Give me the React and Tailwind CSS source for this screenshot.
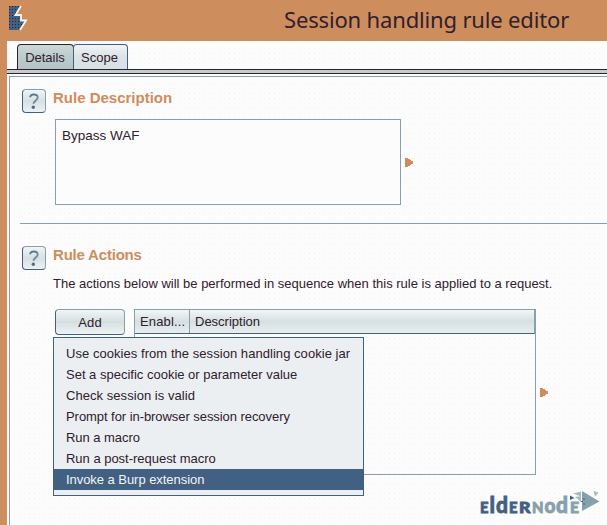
import React from "react";

const actions = [
  ["Use cookies from the session handling cookie jar", "tracking-[0.05px]"],
  ["Set a specific cookie or parameter value", "tracking-[0px]"],
  ["Check session is valid", "tracking-[0.05px]"],
  ["Prompt for in-browser session recovery", "tracking-[-0.06px]"],
  ["Run a macro", "tracking-[-0.04px]"],
  ["Run a post-request macro", "tracking-[-0.02px]"],
  ["Invoke a Burp extension", "tracking-[-0.05px]"],
];

function HelpButton() {
  return (
    <button className="flex h-6 w-6 shrink-0 items-center justify-center rounded-[4px] border border-[#86a0aa] border-b-[#426082] border-l-[#426082] bg-gradient-to-b from-[#f1f5f6] via-[#d6e0e2] to-[#edf1f3]">
      <svg width="12" height="17" viewBox="0 0 12 17" fill="none">
        <path d="M2 4.2C2.6 1.9 4 1.5 5.800 1.500c2.4 0 3.900 1.100 3.900 3 0 2.6-4 3.200-4.200 6.200" stroke="#6f8d9e" strokeWidth="1.900" />
        <path d="M1.800 3.500C3.200.9 7.600.7 9.300 3" stroke="#426082" strokeWidth=".8" />
        <circle cx="5.300" cy="14.300" r="1.700" fill="#4f6e8a" />
      </svg>
    </button>
  );
}

function Arrow() {
  return (
    <svg className="shrink-0" width="8" height="9" viewBox="0 0 8 9" shapeRendering="crispEdges">
      <path d="M0 0h3v1h2v1h1v1h2v3H6v1H5v1H3v1H0z" fill="#ce8d5d" />
    </svg>
  );
}

function BurpMark() {
  return (
    <svg width="20" height="26" viewBox="0 0 20 26" className="block">
      <defs>
        <pattern id="mesh" width="3" height="3" patternUnits="userSpaceOnUse">
          <rect width="3" height="3" fill="#426082" />
          <rect x="1" y="1" width="1" height="1" fill="#3a1c2c" />
        </pattern>
      </defs>
      <path d="M1 1h11l-5 9h6v6h5l-6 9H1z" fill="url(#mesh)" />
      <path d="M13 1l-5.500 9H13v5.500h5L12 25" fill="none" stroke="#f4f4f4" strokeWidth="1.800" />
    </svg>
  );
}

const logoLetters = [
  ["E", 1, 15, 8.5],
  ["l", 10.5, 23, 5.5],
  ["d", 17, 23, 12],
  ["E", 30, 15, 8.5],
  ["R", 40, 15, 11.5],
  ["N", 53, 15, 11.5],
  ["o", 65.5, 20, 11],
  ["d", 77, 23, 12],
  ["E", 91, 15, 9],
];

function EldernodeLogo() {
  return (
    <svg width="122" height="32" viewBox="0 0 122 32" className="block">
      <g fontFamily="Lato, sans-serif" fontWeight="900" strokeWidth="0.8">
        {logoLetters.map(([letter, x, size, width], i) => (
          <text key={i} x={x} y="24.500" fontSize={size} fill={i < 5 ? "#426082" : "#86a0ac"} stroke={i < 5 ? "#426082" : "#86a0ac"} textLength={width} lengthAdjust="spacingAndGlyphs">
            {letter}
          </text>
        ))}
      </g>
      <path d="M103 3l17.500 10.500-17.500 9.500z" fill="#86a0ac" />
      <path d="M94 5.500l8-2v5zM96 9l6-1v6zM114.500 3l5 1.500-3.500 4z" fill="#a9bcc0" />
      <path d="M91 7.500l4.500 2.500-4.500 2z" fill="#426082" />
      <path d="M102 13.500h2m0-2.500h2m-2 5h2" stroke="#426082" />
    </svg>
  );
}

export default function App() {
  return (
    <div className="relative flex h-[525px] w-[607px] flex-col overflow-hidden bg-[#fcfcfc] font-['Liberation_Sans',Arial,sans-serif] text-[13px] leading-[15px] text-[#30202c]">
      <header className="flex h-[41px] shrink-0 bg-[#ce8d5d]">
        <div className="pt-[5px] pl-2">
          <BurpMark />
        </div>
        <h1 className="ml-[256px] pt-[4px] font-['Noto_Sans','Open_Sans',sans-serif] text-[22px] leading-[30px] tracking-[-0.16px] whitespace-nowrap">Session handling rule editor</h1>
      </header>

      <div className="flex min-h-0 flex-1">
        <div className="w-[7px] shrink-0 bg-[#ce8d5d]" />
        <main className="flex min-w-0 flex-1 flex-col bg-[radial-gradient(#f1f3f4_0.7px,transparent_0.8px)] bg-[size:5px_5px]">
          <nav className="flex h-[28px] shrink-0 pt-[3px] pl-[10px]">
            <div className="flex w-[57px] items-center justify-center rounded-t-[4px] border border-b-0 border-[#30202c] bg-gradient-to-b from-[#ccd6d6] via-[#bdcbcd] to-[#b2c3c8] pr-[1px]">Details</div>
            <div className="-ml-px flex w-[55px] items-center justify-center rounded-t-[4px] border border-b-0 border-[#426082] bg-gradient-to-b from-[#f1f5f6] via-[#dbe3e6] to-[#d8e1e4] pr-[2px]">Scope</div>
          </nav>
          <div className="h-[5px] shrink-0 border-y border-[#30202c] bg-[#c1cece]" />

          <div className="mt-[2px] ml-[2px] flex min-h-0 flex-1 flex-col border-t border-l border-[#86a0ac]">
            <section className="ml-3 flex h-[146px] shrink-0 pt-3">
              <HelpButton />
              <div className="ml-[7px]">
                <h2 className="h-[30px] text-[15px] leading-[17px] font-bold text-[#ce8d5d]">Rule Description</h2>
                <div className="ml-[2px] flex items-center gap-1">
                  <div className="h-[86px] w-[346px] border border-[#86a0ac] bg-[#fcfcfc] px-[6px] pt-[8px] text-[13.5px]">Bypass WAF</div>
                  <Arrow />
                </div>
              </div>
            </section>
            <div className="ml-[10px] h-px shrink-0 bg-[#86a0ac]" />
            <section className="ml-3 flex shrink-0 pt-[22px]">
              <HelpButton />
              <div className="ml-[7px] min-w-0">
                <h2 className="h-[30px] text-[15px] leading-[17px] font-bold tracking-[-0.2px] text-[#ce8d5d]">Rule Actions</h2>
                <p className="h-[33px] whitespace-nowrap">The actions below will be performed in sequence when this rule is applied to a request.</p>
                <div className="ml-[2px] flex">
                  <button className="flex h-[26px] w-[70px] shrink-0 items-center justify-center rounded-[4px] border border-[#86a0aa] border-b-[#426082] border-l-[#426082] bg-gradient-to-b from-[#f1f5f6] via-[#d5dfe1] to-[#eef2f4] text-[13px] tracking-[0.2px]">Add</button>
                  <div className="ml-[9px] h-[166px] w-[402px] shrink-0 border border-[#86a0ac]">
                    <div className="flex h-[24px] border-r border-b border-r-[#86a0ac] border-b-[#426082] bg-gradient-to-b from-[#f3f6f7] via-[#d6e0e2] to-[#e9eef0] leading-[23px]">
                      <div className="w-[55px] border-r border-[#86a0ac] pl-[5px] tracking-[0.15px]">Enabl...</div>
                      <div className="pl-[5px]">Description</div>
                    </div>
                  </div>
                  <div className="ml-1 flex h-[166px] items-center">
                    <Arrow />
                  </div>
                </div>
              </div>
            </section>
          </div>
        </main>
      </div>

      <div className="absolute top-[337px] left-[53px] w-[311px] border border-[#426082] bg-[#ebeff2] pt-[5px] pb-[5px]" role="menu">
        {actions.map(([label, tracking], i) => (
          <div key={label} role="menuitem" className={"flex h-[21px] items-center pl-3 " + (i === 6 ? "bg-[#426082] text-[#f1f5f7]" : "")}>
            <span className={"whitespace-nowrap " + tracking}>{label}</span>
          </div>
        ))}
      </div>
      <div className="absolute top-[488px] left-[479px]">
        <EldernodeLogo />
      </div>
    </div>
  );
}
